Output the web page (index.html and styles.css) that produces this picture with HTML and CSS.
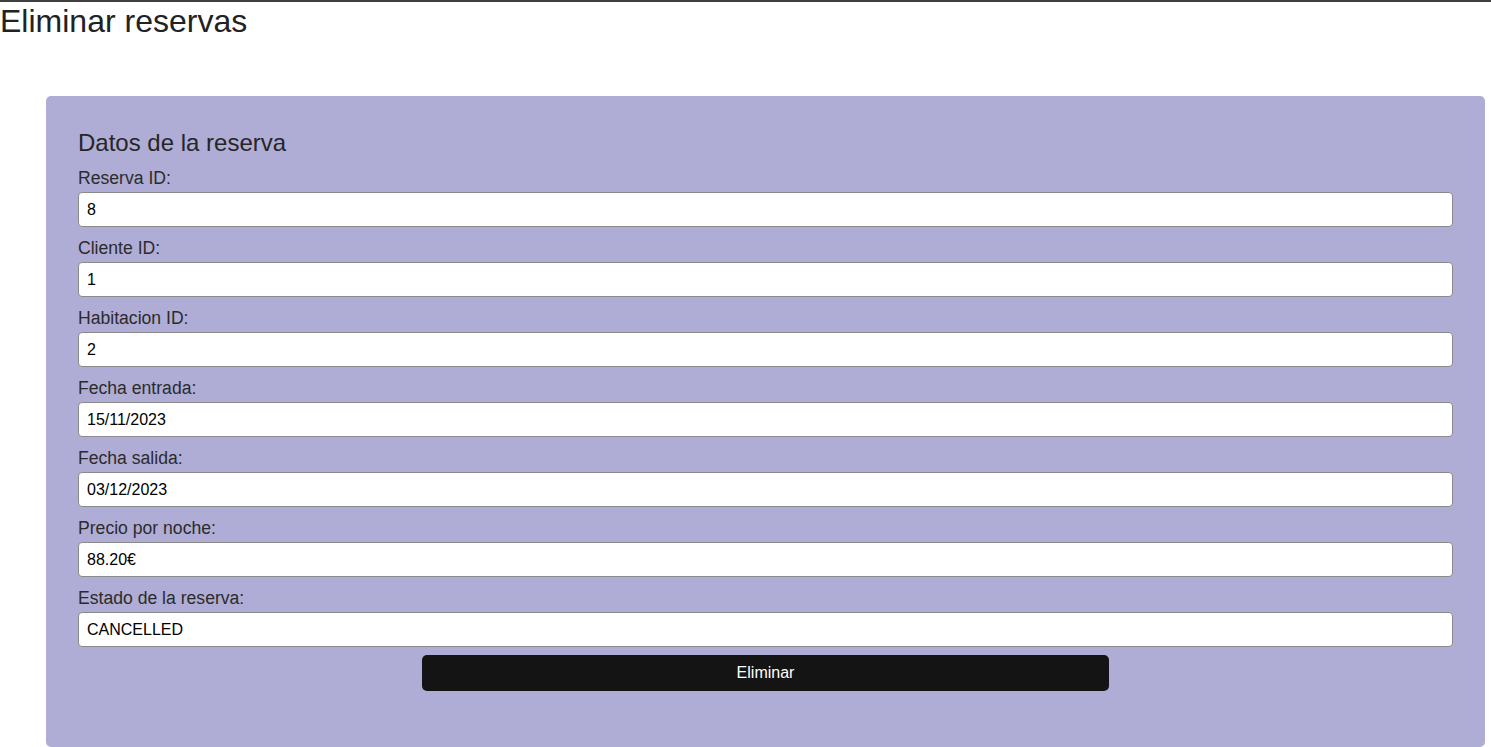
FILE: index.html
```html
<!DOCTYPE html>
<html lang="es">
<head>
<meta charset="utf-8">
<title>Eliminar reservas</title>
<link rel="stylesheet" href="styles.css">
</head>
<body>
<header class="page-header">
  <h1 class="page-title">Eliminar reservas</h1>
</header>
<main class="card">
  <h2 class="card-title">Datos de la reserva</h2>
  <form class="form">
    <div class="field">
      <label class="field-label" for="rid">Reserva ID:</label>
      <input class="field-input" id="rid" type="text" value="8" readonly>
    </div>
    <div class="field">
      <label class="field-label" for="cid">Cliente ID:</label>
      <input class="field-input" id="cid" type="text" value="1" readonly>
    </div>
    <div class="field">
      <label class="field-label" for="hid">Habitacion ID:</label>
      <input class="field-input" id="hid" type="text" value="2" readonly>
    </div>
    <div class="field">
      <label class="field-label" for="fe">Fecha entrada:</label>
      <input class="field-input" id="fe" type="text" value="15/11/2023" readonly>
    </div>
    <div class="field">
      <label class="field-label" for="fs">Fecha salida:</label>
      <input class="field-input" id="fs" type="text" value="03/12/2023" readonly>
    </div>
    <div class="field">
      <label class="field-label" for="pn">Precio por noche:</label>
      <input class="field-input" id="pn" type="text" value="88.20€" readonly>
    </div>
    <div class="field">
      <label class="field-label" for="er">Estado de la reserva:</label>
      <input class="field-input" id="er" type="text" value="CANCELLED" readonly>
    </div>
    <div class="actions">
      <button class="btn-delete" type="button">Eliminar</button>
    </div>
  </form>
</main>
</body>
</html>
```
FILE: styles.css
```css
html, body {
  margin: 0;
  padding: 0;
  background: #ffffff;
}

body {
  font-family: "Liberation Sans", Arial, sans-serif;
  color: #222222;
  border-top: 2px solid #404040;
}

.page-header {
  padding-top: 1px;
}

.page-title {
  margin: 0;
  font-size: 32px;
  font-weight: 400;
  line-height: 36px;
  color: #222222;
}

.card {
  margin: 57px 6px 0 46px;
  padding: 33px 32px 56px 32px;
  background: #afadd6;
  border-radius: 5px;
}

.card-title {
  margin: 0 0 1px 0;
  font-size: 24px;
  font-weight: 400;
  line-height: 27px;
  color: #262626;
}

.form {
  display: flex;
  flex-direction: column;
}

.field {
  display: flex;
  flex-direction: column;
}

.field-label {
  margin: 11px 0 4px 0;
  font-size: 17.6px;
  line-height: 20px;
  color: #2b2b2b;
}

.field-input {
  box-sizing: border-box;
  height: 35px;
  width: 100%;
  margin: 0;
  padding: 0 8px;
  border: 1px solid #8a8a8a;
  border-radius: 4px;
  background: #ffffff;
  font-family: "Liberation Sans", Arial, sans-serif;
  font-size: 16px;
  color: #000000;
  outline: none;
}

.actions {
  display: flex;
  justify-content: center;
  margin-top: 8px;
}

.btn-delete {
  width: 50%;
  height: 36px;
  border: none;
  border-radius: 5px;
  background: #141414;
  color: #ffffff;
  font-family: "Liberation Sans", Arial, sans-serif;
  font-size: 16px;
  cursor: pointer;
}
```
